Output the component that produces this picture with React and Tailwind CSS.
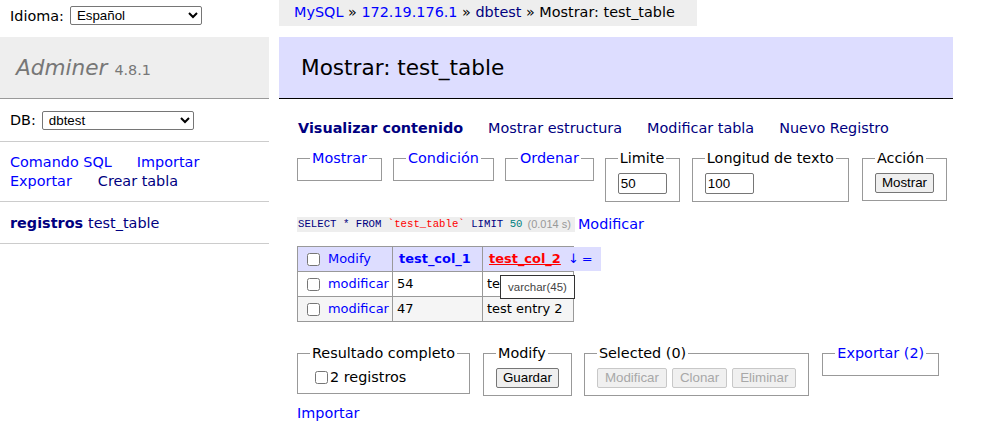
import React from "react";

const arial = "font-['Liberation_Sans',Arial,sans-serif]";

const Fieldset = ({ legend, link, children, className = "" }) => (
  <fieldset className={`border border-[#999] px-[12px] pb-[7px] ${children ? "pt-[6px]" : ""} ${className}`}>
    <legend
      className={`whitespace-nowrap px-[2px] leading-[18px] ${link ? "text-[#00f]" : "text-black"}`}
    >
      {legend}
    </legend>
    {children}
  </fieldset>
);

const Btn = ({ children, disabled }) => (
  <button
    disabled={disabled}
    className={`${arial} h-[20px] rounded-[2px] border text-[13.33px] leading-[16px] ${
      disabled
        ? "border-[#c8c8c8] bg-[#f0f0f0] px-[7px] text-[#a8a8a8]"
        : "border-[#767676] bg-[#efefef] px-[6px] text-black"
    }`}
  >
    {children}
  </button>
);

const Check = () => (
  <input type="checkbox" className="m-0 h-[13px] w-[13px] align-middle" />
);

export default function App() {
  return (
    <div className="flex min-h-[440px] bg-white font-['DejaVu_Sans',Verdana,sans-serif] text-[14.4px] leading-[18px] text-black">
      {/* sidebar */}
      <aside className="w-[269px] shrink-0">
        <div className="flex h-[37px] items-start pl-[10px] pt-[6px]">
          <div className="flex h-[19px] items-center gap-[6px]">
            <span>Idioma:</span>
            <select
              defaultValue="es"
              className={`${arial} h-[19px] w-[132px] rounded-[2px] border border-[#767676] bg-white pl-[2px] text-[13.33px] text-black`}
            >
              <option value="es">Español</option>
            </select>
          </div>
        </div>
        <h1 className="flex h-[62px] items-center gap-[7px] border-b border-[#999] bg-[#eee] pl-[16px] font-normal text-[#777]">
          <span className="text-[21.6px] italic">Adminer</span>
          <span className="mt-[5px] text-[14.4px]">4.8.1</span>
        </h1>
        <div className="flex h-[43px] items-center gap-[6px] border-b border-[#ccc] px-[10px]">
          <span>DB:</span>
          <select
            defaultValue="dbtest"
            className={`${arial} h-[19px] w-[152px] rounded-[2px] border border-[#767676] bg-white pl-[2px] text-[13.33px] text-black`}
          >
            <option value="dbtest">dbtest</option>
          </select>
        </div>
        <div className="h-[60px] border-b border-[#ccc] px-[10px] pt-[11px] leading-[19px]">
          <div className="flex gap-[25px]">
            <a className="text-[#00f]">Comando SQL</a>
            <a className="text-[#00f]">Importar</a>
          </div>
          <div className="flex gap-[26px]">
            <a className="text-[#00f]">Exportar</a>
            <a className="text-[#000080]">Crear tabla</a>
          </div>
        </div>
        <div className="flex h-[42px] items-center border-b border-[#ccc] px-[10px]">
          <a className="font-bold text-[#000080]">registros</a>
          <a className="ml-[5px] text-[#000080]">test_table</a>
        </div>
      </aside>

      {/* content */}
      <main className="ml-[10px] w-[674px]">
        <div className="inline-block h-[26px] bg-[#eee] pl-[15px] pr-[22px] leading-[24px]">
          <a className="text-[#00f]">MySQL</a> » <a className="text-[#00f]">172.19.176.1</a> »{" "}
          <a className="text-[#000080]">dbtest</a> » Mostrar: test_table
        </div>
        <h2 className="mt-[11px] h-[62px] border-b border-black bg-[#ddf] pl-[22px] text-[21.6px] font-normal leading-[61px]">
          Mostrar: test_table
        </h2>

        <div className="pl-[18px]">
          <nav className="ml-[1px] mt-[20px] flex gap-[25px] text-[#000080]">
            <a className="font-bold">Visualizar contenido</a>
            <a>Mostrar estructura</a>
            <a>Modificar tabla</a>
            <a>Nuevo Registro</a>
          </nav>

          <form className="mt-[12px] flex items-start gap-[11px]">
            <Fieldset legend="Mostrar" link className="h-[32px]" />
            <Fieldset legend="Condición" link className="h-[32px]" />
            <Fieldset legend="Ordenar" link className="h-[32px]" />
            <Fieldset legend="Limite">
              <input
                defaultValue="50"
                className={`${arial} h-[21px] w-[49px] rounded-[2px] border border-[#767676] px-[2px] text-[13.33px]`}
              />
            </Fieldset>
            <Fieldset legend="Longitud de texto" className="ml-[1px]">
              <input
                defaultValue="100"
                className={`${arial} h-[21px] w-[49px] rounded-[2px] border border-[#767676] px-[2px] text-[13.33px]`}
              />
            </Fieldset>
            <Fieldset legend="Acción" className="ml-[2px]">
              <Btn>Mostrar</Btn>
            </Fieldset>
          </form>

          <div className="mt-[13px] flex items-center">
            <code className="flex h-[15px] items-center bg-[#eee] pl-[1px] pr-[4px] font-['Liberation_Mono',monospace] text-[10.7px] text-[#000080]">
              <span className="whitespace-pre">SELECT * FROM </span>
              <span className="text-[#f00]">`test_table`</span>
              <span className="whitespace-pre"> LIMIT </span>
              <span className="text-[#008080]">50</span>
              <span className={`${arial} ml-[5px] text-[11px] text-[#999]`}>(0.014 s)</span>
            </code>
            <a className="ml-[3px] text-[#00f]">Modificar</a>
          </div>

          <table className="relative mt-[13px] border-l border-t border-[#999] text-[12.96px] leading-[16px]">
            <thead className="bg-[#ddf]">
              <tr>
                <td className="h-[25px] w-[95px] border-b border-r border-[#999] pl-[9px]">
                  <span className="flex items-center gap-[8px]">
                    <Check />
                    <a className="text-[#00f]">Modify</a>
                  </span>
                </td>
                <th className="w-[90px] border-b border-r border-[#999] px-[6px] text-left">
                  <a className="text-[#00f]">test_col_1</a>
                </th>
                <th className="relative w-[91px] border-b border-r border-[#999] px-[6px] text-left">
                  <a className="text-[#f00] underline">test_col_2</a>
                  <span className="absolute left-[79px] top-0 flex h-[24px] w-[39px] items-center gap-[3px] bg-[#ddf] pl-[6px] font-normal text-[#00f]">
                    <span>↓</span>
                    <span>=</span>
                  </span>
                </th>
              </tr>
            </thead>
            <tbody>
              <tr className="bg-white">
                <td className="h-[25px] border-b border-r border-[#999] pl-[9px]">
                  <span className="flex items-center gap-[8px]">
                    <Check />
                    <a className="text-[#00f]">modificar</a>
                  </span>
                </td>
                <td className="border-b border-r border-[#999] px-[4px]">54</td>
                <td className="relative border-b border-r border-[#999] px-[4px]">
                  test entry 1
                  <span
                    className={`${arial} absolute left-[17px] top-[3px] flex h-[24px] w-[75px] items-center justify-center border border-[#333] bg-white text-[11.5px] text-[#444]`}
                  >
                    varchar(45)
                  </span>
                </td>
              </tr>
              <tr className="bg-[#f5f5f5]">
                <td className="h-[25px] border-b border-r border-[#999] pl-[9px]">
                  <span className="flex items-center gap-[8px]">
                    <Check />
                    <a className="text-[#00f]">modificar</a>
                  </span>
                </td>
                <td className="border-b border-r border-[#999] px-[4px]">47</td>
                <td className="border-b border-r border-[#999] px-[4px]">test entry 2</td>
              </tr>
            </tbody>
          </table>

          <div className="mt-[22px] flex items-start gap-[13px]">
            <Fieldset legend="Resultado completo">
              <label className="flex items-center gap-[2px] pl-[5px]">
                <Check />
                <span>2 registros</span>
              </label>
            </Fieldset>
            <Fieldset legend="Modify">
              <Btn>Guardar</Btn>
            </Fieldset>
            <Fieldset legend="Selected (0)" className="-ml-[1px]">
              <div className="flex gap-[5px]">
                <Btn disabled>Modificar</Btn>
                <Btn disabled>Clonar</Btn>
                <Btn disabled>Eliminar</Btn>
              </div>
            </Fieldset>
            <Fieldset legend="Exportar (2)" link className="h-[32px]" />
          </div>

          <div className="mt-[8px]">
            <a className="text-[#00f]">Importar</a>
          </div>
        </div>
      </main>
    </div>
  );
}
